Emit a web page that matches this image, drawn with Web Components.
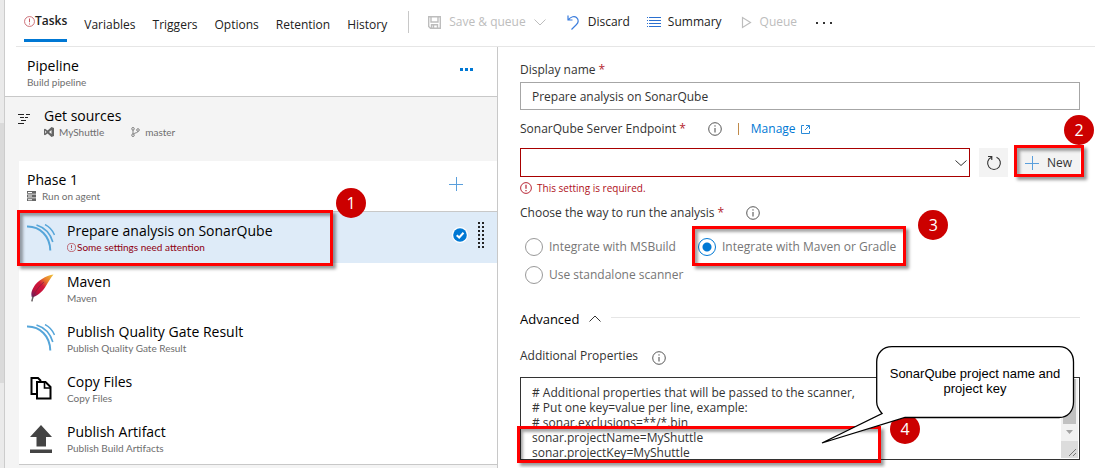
<!DOCTYPE html>
<html lang="en">
<head>
<meta charset="utf-8">
<title>Build pipeline</title>
<style>
html,body{margin:0;background:#fff}
body{font:12px/20px "Open Sans","Noto Sans",sans-serif;color:#212121}
</style>
</head>
<body>
<build-editor></build-editor>
<script>
const base = `*{box-sizing:border-box}button{font:inherit;color:inherit;background:none;border:0;padding:0;margin:0;cursor:pointer}svg{display:block;flex:none}h2,h3,p{margin:0;font-weight:400}`;
function define(name, css, html) {
  customElements.define(name, class extends HTMLElement {
    constructor() {
      super();
      const root = this.attachShadow({mode: 'open'});
      const t = document.createElement('template');
      t.innerHTML = `<style>${base}${css}</style>${typeof html === 'function' ? html(this) : html}`;
      root.append(t.content.cloneNode(true));
    }
  });
}

/* glyphs */
const alertIcon = s => `<svg width="${s}" height="${s}" viewBox="0 0 12 12" fill="none" stroke="currentColor"><circle cx="6" cy="6" r="5.4" stroke-width=".9"/><path d="M6 2.8v4M6 8.1v1.2" stroke-width="1.1"/></svg>`;
const plusIcon = `<svg width="14" height="14" fill="none" stroke="#5a9fdc" stroke-width="1"><path d="M7.5 0v14M0 7.5h14"/></svg>`;
const sonarIcon = `<svg width="28" height="28" viewBox="0 0 28 28" fill="none" stroke="#55a5d9"><path d="M0 2.600C13 2.300 23 12 23.300 26.500" stroke-width="2"/><path d="M9.500 1C17.500 3.500 23.500 10 25.800 18" stroke-width="1.600"/><path d="M18 .5C22 2.500 25.500 6 27.500 11" stroke-width="1.400"/></svg>`;
const icons = {
  sonar: sonarIcon,
  maven: `<svg width="28" height="28" viewBox="0 0 28 28"><defs><linearGradient id="f" x1="1" y1="0" x2="0" y2="1"><stop offset="0" stop-color="#f0c83c"/><stop offset=".3" stop-color="#e8792c"/><stop offset=".5" stop-color="#d2163a"/><stop offset=".75" stop-color="#c2113a"/><stop offset="1" stop-color="#5a2167"/></linearGradient></defs><path d="M26.500 .5C19 1.500 10 7 6.500 13.500 4 18 4 20.500 5 23.500 9 22.500 15 18.500 18 13.500 21 8.500 24 3.500 26.500 .5Z" fill="url(#f)"/><path d="M17 8C11.500 12.500 7 18.500 5 27" fill="none" stroke="#6d2440" stroke-width=".6"/><path d="M6 22.500L4.800 27.500" stroke="#666" stroke-width="1.300"/></svg>`,
  copy: `<svg width="28" height="28" viewBox="0 0 28 28" fill="none" stroke="#000" stroke-width="2"><path d="M9.500 20H4.500V4H11L14 7"/><path d="M10 8H18.500L23.500 13V24.500H10Z" fill="#fff"/><path d="M17.500 8V14H23.500" stroke-width="1.600"/></svg>`,
  upload: `<svg width="28" height="30" viewBox="0 0 28 30" fill="#444"><path d="M14 1L25 13H19V22.500H9.500V13H3ZM3 25.500H25V29H3Z"/></svg>`
};

/* annotations */
define('highlight-box', `:host{position:absolute;box-sizing:border-box;pointer-events:none;border:3px solid #f00;box-shadow:3px 3px 3px rgba(0,0,0,.4),inset 3px 3px 3px rgba(0,0,0,.35);z-index:2}`, '');
define('step-badge', `:host{position:absolute;width:30px;height:30px;border-radius:50%;background:#c00;color:#fff;font-size:16px;line-height:30px;text-align:center;z-index:3}`, '<slot></slot>');
define('speech-balloon', `:host{position:absolute;width:256px;height:100px;z-index:4;color:#000;font:13px/15px "Liberation Sans",Arial,sans-serif}
svg{position:absolute;inset:0}p{position:relative;margin:21px 0 0 64px;width:182px;text-align:center}`,
`<svg width="256" height="100" viewBox="0 0 256 100" fill="#fff" stroke="#000"><path stroke-width="1.300" d="M62 68.500C59 65 56.700 62 56.700 57V17C56.700 8 63 1.700 72 1.700H239C248 1.700 253.500 8 253.500 17V57C253.500 66 248 72.500 239 72.500H85L2 98Z"/></svg><p><slot></slot></p>`);

define('info-icon', `:host{display:inline-flex;color:#444}`, `<svg width="14" height="14" viewBox="0 0 14 14" fill="none" stroke="currentColor" role="img" aria-label="More information"><circle cx="7" cy="7" r="6.300" stroke-width=".9"/><path d="M7 6v4.500M7 3.300v1.300"/></svg>`);

/* header */
define('tab-bar', `:host{display:flex;gap:17px;padding-left:8px}
a{color:inherit;text-decoration:none;display:flex;align-items:center;height:20px;margin-top:15px}
a.on{font-weight:600;height:30px;margin-top:12px;padding-bottom:9px;border-bottom:3px solid #0078d4}
.on svg{color:#c4565f}`,
`<a class="on" href="#tasks">${alertIcon(11)}Tasks</a><a href="#variables">Variables</a><a href="#triggers">Triggers</a><a href="#options">Options</a><a href="#retention">Retention</a><a href="#history">History</a>`);

define('command-bar', `:host{display:flex;align-items:center;height:22px;margin:11px 0 0 21px;padding-left:19px;border-left:1px solid #c8c8c8}
button{display:flex;align-items:center;height:20px}button:disabled{color:#bdbdbd}
.save{gap:8px;margin-right:21px}.disc{gap:9px;margin-right:17px}.sum{gap:7px;margin-right:19px}.q{gap:8px;margin-right:19px}`,
`<button class="save" disabled><svg width="13" height="13" fill="none" stroke="#bdbdbd" stroke-width="1.400"><path d="M.7 .7H12.300V12.300H2.500L.7 10.500ZM3 1V6H10V1M3.500 12V8.700H9.500V12M5.500 9V12"/></svg>Save &amp; queue<svg width="12" height="12" fill="none" stroke="#bdbdbd"><path d="M.5 3.500L6 9L11.500 3.500"/></svg></button>
<button class="disc"><svg width="12" height="15" fill="none" stroke="#3b7ddd" stroke-width="1.200"><path d="M1 .5V5H5.500M1.200 4.800C4 1.500 7.500 .8 9.500 2.500C12 4.800 11.500 7.500 9.500 9.500L4.500 14.500"/></svg>Discard</button>
<button class="sum"><svg width="14" height="10" fill="none" stroke="#2b70d0"><path d="M0 .5H1M2 .5H14M0 3.500H1M2 3.500H14M0 6.500H1M2 6.500H14M0 9.500H1M2 9.500H14"/></svg>Summary</button>
<button class="q" disabled><svg width="11" height="13" fill="none" stroke="#bdbdbd" stroke-width="1.200"><path d="M1.500 1.500V11.500L9.500 6.500Z"/></svg>Queue</button>
<button aria-label="More"><svg width="16" height="4" fill="#333"><path d="M0 2h2v2H0zM7 2h2v2H7zM14 2h2v2h-2z"/></svg></button>`);

/* left pane */
const twoLine = `h3{font-size:14px;line-height:20px;color:#000}.sub{font:10px/12px Lato,"Open Sans",sans-serif;color:#6e6e6e;display:flex;align-items:center}`;
define('task-row', `:host{box-sizing:border-box;display:flex;align-items:center;position:relative;height:50px;padding-left:8px}
:host([selected]){background:#deebf8}:host([selected]),:host(:last-child){height:51px}${twoLine}
.icon{width:28px;height:30px;display:flex;align-items:center;margin-right:12px}
.text{flex:1;align-self:flex-start;padding-top:9px}
.alert{color:#b0303b;gap:1px}.alert span{color:#8f0010}
.end{display:flex;align-items:center;gap:10px;margin-right:13px;align-self:flex-start;height:46px}`,
el => {
  const sel = el.hasAttribute('selected'), alert = el.hasAttribute('alert');
  let dots = '';
  for (let r = 0; r < 7; r++) dots += `M0 ${r * 4}h2v2h-2zM4 ${r * 4}h2v2h-2z`;
  return `<div class="icon">${icons[el.getAttribute('icon')]}</div>
<div class="text"><h3><slot></slot></h3><p class="sub${alert ? ' alert' : ''}">${alert ? alertIcon(9) : ''}<span>${el.getAttribute('sub')}</span></p></div>
${sel ? `<div class="end"><svg width="16" height="16"><circle cx="8" cy="8" r="8" fill="#fff"/><circle cx="8" cy="8" r="6.800" fill="#0078d4"/><path d="M4.700 8.200L7.200 10.500L11.500 5.800" fill="none" stroke="#fff" stroke-width="2"/></svg><svg width="6" height="26" fill="#222"><path d="${dots}"/></svg></div>` : ''}<slot name="note"></slot>`;
});

define('pipeline-pane', `:host{box-sizing:border-box;display:flex;flex-direction:column;background:#f4f4f4;border-right:1px solid #c8c8c8}${twoLine}
.head{display:flex;height:50px;background:#fff;padding:9px 24px 0 22px;border-bottom:1px solid #c8c8c8;justify-content:space-between}
.head button{height:26px}
.src{display:flex;height:64px;padding:9px 0 0 13px;gap:14px}.src>svg{margin-top:7px}
.src .sub{gap:5px}.src .b{margin-left:22px}
.card{margin-left:14px;background:#fff;border-bottom:1px solid #c8c8c8}
.phase{display:flex;justify-content:space-between;height:51px;padding:9px 34px 0 8px;border-bottom:1px solid #c8c8c8}
.phase .sub{gap:6px}.phase button{height:28px}
highlight-box{left:-2px;top:-2px;width:316px;height:56px}step-badge{left:317px;top:-24px}`,
`<div class="head"><div><h3>Pipeline</h3><p class="sub">Build pipeline</p></div><button aria-label="Pipeline actions"><svg width="13" height="3" fill="#0078d4"><path d="M0 0h3v3H0zM5 0h3v3H5zM10 0h3v3h-3z"/></svg></button></div>
<div class="src"><svg width="12" height="12" fill="none" stroke="#222"><path d="M0 1.500H6M8 1.500H12M2 4.500H6M7 4.500H10M3 7.500H8M0 10.500H6" stroke-width="1"/></svg>
<div><h3>Get sources</h3><p class="sub"><svg width="10" height="10" viewBox="0 0 10 10" fill="#666"><path fill-rule="evenodd" d="M7.500 0L10 1V9L7.500 10L3.600 6.400L1 8.300L0 7.800V2.200L1 1.700L3.600 3.600ZM7.500 3L5 5L7.500 7ZM1.200 3.600V6.400L2.500 5Z"/></svg><span>MyShuttle</span><svg class="b" width="9" height="10" fill="none" stroke="#777" stroke-width=".9"><circle cx="2" cy="1.800" r="1.300"/><circle cx="2" cy="8.200" r="1.300"/><circle cx="7" cy="3" r="1.300"/><path d="M2 3V7M7 4.300C7 6 4 5.500 2.500 7"/></svg><span>master</span></p></div></div>
<div class="card"><div class="phase"><div><h3>Phase 1</h3><p class="sub"><svg width="9" height="10" fill="#666"><path fill-rule="evenodd" d="M0 0h9v2.800H0zM0 3.600h9v2.800H0zM0 7.200h9V10H0zM1 1v1h4V1zM1 4.600v1h4v-1zM1 8.200v1h4v-1z"/></svg><span>Run on agent</span></p></div><button aria-label="Add a task">${plusIcon}</button></div>
<task-row selected alert icon="sonar" sub="Some settings need attention">Prepare analysis on SonarQube<highlight-box slot="note"></highlight-box><step-badge slot="note">1</step-badge></task-row>
<task-row icon="maven" sub="Maven">Maven</task-row>
<task-row icon="sonar" sub="Publish Quality Gate Result">Publish Quality Gate Result</task-row>
<task-row icon="copy" sub="Copy Files">Copy Files</task-row>
<task-row icon="upload" sub="Publish Build Artifacts">Publish Artifact</task-row></div>`);

/* right pane */
define('settings-pane', `:host{display:block;padding:13px 15px 8px 22px;color:#333}
.lab{display:flex;align-items:center;height:20px}.req{color:#b4232e;margin-left:3px}
input,select,textarea{font:inherit;color:inherit;margin:0;outline:0;border-radius:0}
.name{display:block;width:100%;height:28px;margin:2px 0 9px;border:1px solid #a6a6a6;padding:0 11px}
info-icon{margin-left:22px}
.bar{width:1px;height:12px;background:#c08a4a;margin:0 12px 0 16px}
a{color:#0078d4;text-decoration:none;display:flex;align-items:center;gap:5px}
.end{display:flex;height:29px;margin-top:9px}
.sel{flex:1;display:grid}.sel>*{grid-area:1/1}.sel select{appearance:none;background:#fff;border:1px solid #a80000;width:100%;padding:0 11px}
.sel svg{justify-self:end;align-self:center;margin-right:3px;pointer-events:none}
.end button{background:#f3f3f3;display:flex;align-items:center;justify-content:center}
.ref{width:29px;margin:0 9px}.new{position:relative;width:63px;gap:8px;font-size:12px}
.new highlight-box{inset:-3px -4px 0 -3px}.new step-badge{right:-14px;top:-33px}
.err{display:flex;align-items:center;gap:5px;height:16px;margin:3px 0 7px;font-size:10px;color:#b01020}
fieldset{border:0;margin:0;padding:0;min-width:0}
.opts{display:grid;grid-template-columns:173px max-content;grid-auto-rows:28px;margin-top:10px;padding-left:5px;color:#767676}
.opts label{position:relative;display:flex;align-items:center;gap:6px;justify-self:start}
.opts input{appearance:none;width:18px;height:18px;border:1px solid #999;border-radius:50%}
.opts input:checked{border-color:#0078d4;background:radial-gradient(circle,#0078d4 4px,transparent 5px)}
.opts highlight-box{inset:-7px -10px -5px -6px}.opts step-badge{right:-52px;top:-23px}
.adv{display:flex;align-items:center;height:20px;margin:20px 0 17px;color:#000}
.adv button{display:flex;align-items:center;gap:10px;font-size:13px}.adv hr{flex:1;border:0;border-top:1px solid #e6e6e6;margin:0 0 3px 10px}
.adv+.lab info-icon{margin:4px 0 0 14px}
.area{position:relative;display:flex;height:83px;margin-top:11px;border:1px solid #333}
textarea{flex:1;min-width:0;border:0;padding:7px 0 0 11px;line-height:15px;resize:none;overflow:hidden;background:none}
.scroll{width:17px;background:#f1f1f1;display:flex;flex-direction:column;align-items:center;margin:1px}
.scroll i{width:13px;height:46px;background:#c1c1c1}.scroll svg+svg{background:#dcdcdc}
.area highlight-box{left:-4px;bottom:-4px;width:364px;height:37px}
.area step-badge{left:369px;top:36px}
.area speech-balloon{left:299px;top:-33px}`,
`<label class="lab" for="dn">Display name<span class="req">*</span></label>
<input class="name" id="dn" value="Prepare analysis on SonarQube">
<div class="lab"><label for="ep">SonarQube Server Endpoint<span class="req">*</span></label><info-icon></info-icon><span class="bar"></span><a href="#manage">Manage<svg width="9" height="9" fill="none" stroke="#2a8ad8"><path d="M3 .5H.5V8.500H8.500V6M5 .5H8.500V4M8.300 .7L4 5"/></svg></a></div>
<div class="end"><div class="sel"><select id="ep"><option></option></select><svg width="12" height="12" fill="none" stroke="#333"><path d="M.5 3.500L6 8.500L11.500 3.500"/></svg></div>
<button class="ref" aria-label="Refresh"><svg width="16" height="16" fill="none" stroke="#333" stroke-width="1.100"><path d="M5.500 2.200A6.400 6.400 0 1 0 10.500 2.200M2 1.500H5.800V5"/></svg></button>
<button class="new">${plusIcon}New<highlight-box></highlight-box><step-badge>2</step-badge></button></div>
<p class="err">${alertIcon(12)}This setting is required.</p>
<fieldset aria-labelledby="way"><div class="lab"><span id="way">Choose the way to run the analysis<span class="req">*</span></span><info-icon></info-icon></div>
<div class="opts"><label><input type="radio" name="way">Integrate with MSBuild</label><label><input type="radio" name="way" checked>Integrate with Maven or Gradle<highlight-box></highlight-box><step-badge>3</step-badge></label><label><input type="radio" name="way">Use standalone scanner</label></div></fieldset>
<div class="adv"><button aria-expanded="true">Advanced<svg width="12" height="12" fill="none" stroke="#333"><path d="M.5 8.500L6 3L11.500 8.500"/></svg></button><hr></div>
<div class="lab"><label for="ap">Additional Properties</label><info-icon></info-icon></div>
<div class="area"><textarea id="ap" spellcheck="false"># Additional properties that will be passed to the scanner,
# Put one key=value per line, example:
# sonar.exclusions=**/*.bin
sonar.projectName=MyShuttle
sonar.projectKey=MyShuttle</textarea><div class="scroll" aria-hidden="true"><i></i><svg width="17" height="17" fill="#a3a3a3"><path d="M5 6H12L8.500 10Z"/></svg><svg width="17" height="17" fill="none" stroke="#777"><path d="M8 15L15 8M12 15L15 12"/></svg></div>
<highlight-box></highlight-box><step-badge>4</step-badge><speech-balloon>SonarQube project name and project key</speech-balloon></div>`);

define('build-editor', `:host{display:flex;min-height:100vh}
.rail{flex:none;width:5px;background:#eaeaea;border-right:1px solid #ccc;padding-top:123px}.rail i{display:block;height:260px;background:#dadada}
main{flex:1;min-width:0;display:flex;flex-direction:column}
header{display:flex;height:47px;margin-left:11px;border-bottom:1px solid #e6e6e6}
.body{flex:1;display:grid;grid-template-columns:493px minmax(0,1fr)}`,
`<div class="rail"><i></i></div><main><header><tab-bar></tab-bar><command-bar></command-bar></header><div class="body"><pipeline-pane></pipeline-pane><settings-pane></settings-pane></div></main>`);
</script>
</body>
</html>
